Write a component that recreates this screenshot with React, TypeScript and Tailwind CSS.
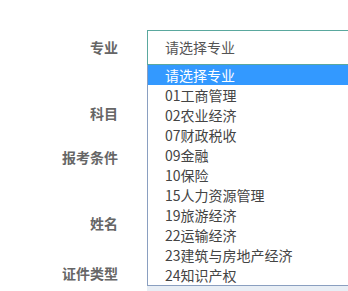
import React from "react";

const options = [
  "请选择专业",
  "01工商管理",
  "02农业经济",
  "07财政税收",
  "09金融",
  "10保险",
  "15人力资源管理",
  "19旅游经济",
  "22运输经济",
  "23建筑与房地产经济",
  "24知识产权",
];

const font = { fontFamily: '"Noto Sans CJK SC", "Liberation Sans", sans-serif' };

const Row: React.FC<{ label: string; className: string; children?: React.ReactNode }> = ({
  label,
  className,
  children,
}) => (
  <div className={`flex h-[35px] items-center ${className}`}>
    <div className="w-[118px] shrink-0 text-right text-[14px] font-bold text-[#666]">{label}</div>
    <div className="ml-[29px] h-full w-[230px] shrink-0">{children}</div>
  </div>
);

export default function App() {
  return (
    <div className="relative h-[291px] w-[348px] overflow-hidden bg-white" style={font}>
      <Row label="专业" className="mt-[30px]">
        <div className="flex h-[35px] items-center border border-[#5aa89e] pl-[17px] text-[14px] text-[#555]">
          请选择专业
        </div>
      </Row>
      <Row label="科目" className="mt-[31px]" />
      <Row label="报考条件" className="mt-[9px]" />
      <Row label="姓名" className="mt-[31px]" />
      <Row label="证件类型" className="mt-[15px]">
        <div className="h-full bg-[#e8eef5]" />
      </Row>

      {/* open dropdown list */}
      <ul className="absolute left-[147px] top-[65px] w-[230px] border border-t-0 border-[#8a9fc0] bg-white text-[14px] text-[#444]">
        {options.map((o, i) => (
          <li
            key={o}
            className={`flex h-[20px] items-center pl-[17px] leading-none ${
              i === 0 ? "bg-[#3399ff] text-white" : ""
            }`}
          >
            {o}
          </li>
        ))}
      </ul>
    </div>
  );
}
